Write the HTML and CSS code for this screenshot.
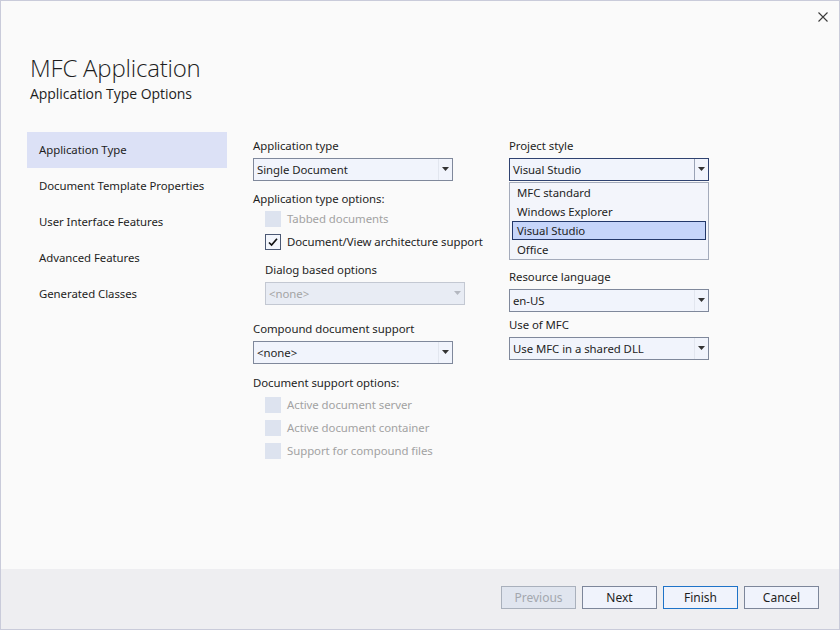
FILE: index.html
```html
<!DOCTYPE html>
<html>
<head>
<meta charset="utf-8">
<link rel="stylesheet" href="styles.css">
</head>
<body>
<div class="window">
  <div class="main">
    <button class="close" aria-label="Close">
      <svg width="10" height="10" viewBox="0 0 10 10"><path d="M0.5 0.5L9.5 9.5M9.5 0.5L0.5 9.5" stroke="#3a3a3a" stroke-width="1.1" fill="none"/></svg>
    </button>
    <header class="header">
      <h1 class="title">MFC Application</h1>
      <h2 class="subtitle">Application Type Options</h2>
    </header>
    <div class="body">
      <nav class="nav">
        <div class="nav-item active">Application Type</div>
        <div class="nav-item">Document Template Properties</div>
        <div class="nav-item">User Interface Features</div>
        <div class="nav-item">Advanced Features</div>
        <div class="nav-item">Generated Classes</div>
      </nav>
      <div class="col col1">
        <div class="field">
          <div class="label">Application type</div>
          <div class="select"><span class="value">Single Document</span><span class="arrow"><svg width="7" height="5" viewBox="0 0 7 5"><path d="M0 0H7L3.5 4Z" fill="#333"/></svg></span></div>
        </div>
        <div class="group-label gl1">Application type options:</div>
        <div class="indent">
          <div class="check disabled"><span class="box"></span><span>Tabbed documents</span></div>
          <div class="check"><span class="box checked"><svg width="12" height="12" viewBox="0 0 12 12"><path d="M2 6.5L4.6 9L10 2.8" stroke="#111" stroke-width="1.7" fill="none"/></svg></span><span>Document/View architecture support</span></div>
          <div class="field f-dialog">
            <div class="label">Dialog based options</div>
            <div class="select disabled"><span class="value">&lt;none&gt;</span><span class="arrow"><svg width="7" height="5" viewBox="0 0 7 5"><path d="M0 0H7L3.5 4Z" fill="#b4b8c0"/></svg></span></div>
          </div>
        </div>
        <div class="field f-compound">
          <div class="label">Compound document support</div>
          <div class="select"><span class="value">&lt;none&gt;</span><span class="arrow"><svg width="7" height="5" viewBox="0 0 7 5"><path d="M0 0H7L3.5 4Z" fill="#333"/></svg></span></div>
        </div>
        <div class="group-label gl2">Document support options:</div>
        <div class="indent rows2">
          <div class="check disabled"><span class="box"></span><span>Active document server</span></div>
          <div class="check disabled"><span class="box"></span><span>Active document container</span></div>
          <div class="check disabled"><span class="box"></span><span>Support for compound files</span></div>
        </div>
      </div>
      <div class="col col2">
        <div class="field f-style">
          <div class="label">Project style</div>
          <div class="select focused"><span class="value">Visual Studio</span><span class="arrow"><svg width="7" height="5" viewBox="0 0 7 5"><path d="M0 0H7L3.5 4Z" fill="#333"/></svg></span></div>
          <div class="dropdown">
            <div class="opt">MFC standard</div>
            <div class="opt">Windows Explorer</div>
            <div class="opt selected">Visual Studio</div>
            <div class="opt">Office</div>
          </div>
        </div>
        <div class="field f-lang">
          <div class="label">Resource language</div>
          <div class="select"><span class="value">en-US</span><span class="arrow"><svg width="7" height="5" viewBox="0 0 7 5"><path d="M0 0H7L3.5 4Z" fill="#333"/></svg></span></div>
        </div>
        <div class="field f-mfc">
          <div class="label">Use of MFC</div>
          <div class="select"><span class="value">Use MFC in a shared DLL</span><span class="arrow"><svg width="7" height="5" viewBox="0 0 7 5"><path d="M0 0H7L3.5 4Z" fill="#333"/></svg></span></div>
        </div>
      </div>
    </div>
  </div>
  <footer class="footer">
    <button class="btn disabled">Previous</button>
    <button class="btn">Next</button>
    <button class="btn default">Finish</button>
    <button class="btn">Cancel</button>
  </footer>
</div>
</body>
</html>
```

FILE: styles.css
```css
* { box-sizing: border-box; }
html, body { margin: 0; padding: 0; }
body {
  font-family: "Noto Sans", "Open Sans", sans-serif;
  font-size: 11.4px;
  letter-spacing: -0.05px;
  color: #1e1e1e;
  background: #fafafa;
}
.window {
  width: 840px;
  height: 630px;
  border: 1px solid #c9cbda;
  background: #fafafa;
  display: flex;
  flex-direction: column;
}
.main {
  flex: 1;
  position: relative;
  padding-top: 51px;
}
.close {
  position: absolute;
  top: 11px;
  right: 11px;
  width: 10px;
  height: 10px;
  padding: 0;
  border: 0;
  background: none;
  display: flex;
}
.header { padding-left: 29px; }
.title {
  margin: 0;
  font-family: "Open Sans", sans-serif;
  font-weight: 300;
  font-size: 24px;
  line-height: 32px;
  color: #1e1e1e;
  letter-spacing: -0.2px;
}
.subtitle {
  margin: 2px 0 0;
  font-family: "Open Sans", sans-serif;
  font-weight: 400;
  font-size: 14px;
  line-height: 16px;
  letter-spacing: -0.05px;
  color: #1e1e1e;
}
.body {
  display: flex;
  margin-top: 30px;
  padding-left: 26px;
}
.nav { width: 200px; flex: none; }
.nav-item {
  height: 36px;
  line-height: 36px;
  padding-left: 12px;
  white-space: nowrap;
}
.nav-item.active { background: #dce1f6; }
.col { flex: none; padding-top: 6px; }
.col1 { width: 256px; margin-left: 26px; }
.col2 { width: 200px; }
.label { height: 16px; line-height: 16px; margin-bottom: 4px; white-space: nowrap; }
.select {
  width: 200px;
  height: 23px;
  border: 1px solid #7f889b;
  background: #f1f4fc;
  display: flex;
  align-items: stretch;
}
.select .value {
  flex: 1;
  padding-left: 3px;
  line-height: 21px;
  white-space: nowrap;
}
.select .arrow {
  width: 14px;
  border-left: 1px solid #e2e6ef;
  display: flex;
  align-items: center;
  justify-content: center;
}
.select.disabled {
  border-color: #c3c8d2;
  background: #e8ecf4;
  color: #a4a4a4;
}
.select.disabled .arrow { border-left-color: #e8ecf4; }
.select.focused { border-color: #2f4270; }
.select.focused .arrow { border-left-color: #9aa3b6; }
.group-label { height: 16px; line-height: 16px; white-space: nowrap; }
.gl1 { margin-top: 10px; }
.gl2 { margin-top: 11px; }
.indent { padding-left: 12px; }
.rows2 { margin-top: 2px; }
.check {
  height: 23px;
  display: flex;
  align-items: center;
  gap: 6px;
  white-space: nowrap;
}
.check .box {
  width: 16px;
  height: 16px;
  background: #dde3ef;
  display: flex;
  align-items: center;
  justify-content: center;
}
.check .box.checked {
  background: #f3f6fc;
  border: 1px solid #4b5873;
}
.check.disabled { color: #a2a2a2; }
.f-dialog { margin-top: 9px; }
.f-compound { margin-top: 16px; }
.f-style { position: relative; }
.dropdown {
  position: absolute;
  left: 0;
  top: 44px;
  width: 200px;
  border: 1px solid #a4abbb;
  background: #f3f5fb;
  padding: 0 1px;
}
.opt {
  height: 19px;
  line-height: 17px;
  margin: 0 1px;
  padding-left: 4px;
  border: 1px solid transparent;
  white-space: nowrap;
}
.opt.selected {
  background: #c6d5fa;
  border-color: #23386a;
}
.f-lang { margin-top: 88px; }
.f-mfc { margin-top: 5px; }
.footer {
  height: 60px;
  flex: none;
  background: #eeeef1;
  display: flex;
  justify-content: flex-end;
  align-items: flex-start;
  gap: 6px;
  padding: 17px 20px 0 0;
}
.btn {
  width: 75px;
  height: 23px;
  border: 1px solid #7d869a;
  background: #f0f3fc;
  font-family: inherit;
  font-size: 12px;
  letter-spacing: 0;
  color: #1e1e1e;
  padding: 0;
}
.btn.default { border-color: #1f73c8; }
.btn.disabled {
  background: #e0e5ef;
  border-color: #a9b0bc;
  color: #a3a7ae;
}
```
